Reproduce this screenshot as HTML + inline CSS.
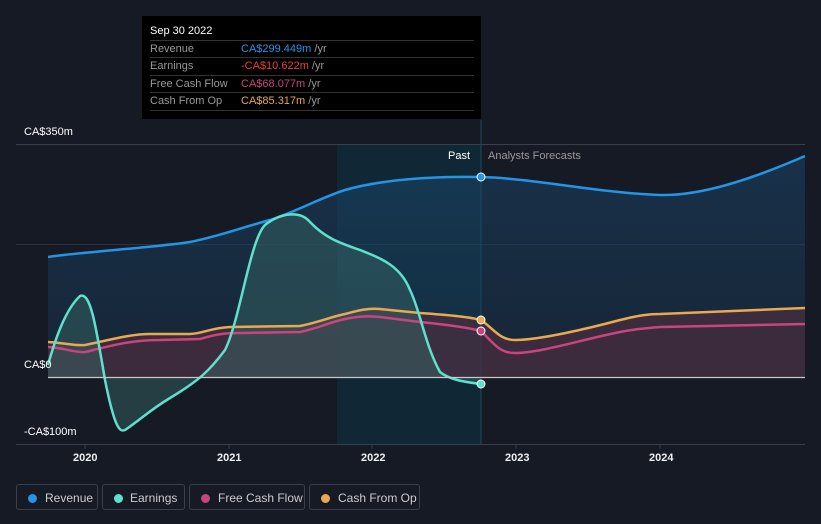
<!DOCTYPE html>
<html><head><style>
body{margin:0;width:821px;height:524px;background:#151a25;font-family:"Liberation Sans",sans-serif;overflow:hidden;position:relative}
.t{position:absolute;font-size:11px;color:#fff}
.y{font-weight:bold;color:#eee}
.tip{position:absolute;left:142px;top:16px;width:339px;height:103px;background:#000}
.tip .r{position:absolute;left:8px;width:324px;border-top:1px solid #333;font-size:11px;color:#999;height:17px;line-height:17px}
.tip .r span{position:absolute;left:91px}
.leg{position:absolute;top:484px;height:26px;border:1px solid #3a3f4a;border-radius:3px;color:#ccc;font-size:12px;line-height:26px;box-sizing:border-box}
.leg i{position:absolute;left:11px;top:9px;width:9px;height:9px;border-radius:50%}
</style></head><body>
<svg width="821" height="524" style="position:absolute;left:0;top:0">
<defs>
<linearGradient id="rg" x1="0" y1="0" x2="0" y2="1"><stop offset="0" stop-color="#1a4a70" stop-opacity=".7"/><stop offset="1" stop-color="#1a3550" stop-opacity=".6"/></linearGradient>
</defs>
<rect x="337" y="145" width="144" height="299" fill="#0f2a38" opacity=".9"/>
<line x1="16" y1="144.5" x2="805" y2="144.5" stroke="#3a3f4a"/>
<line x1="16" y1="244.5" x2="805" y2="244.5" stroke="#2c313c"/>
<line x1="16" y1="444.5" x2="805" y2="444.5" stroke="#3a3f4a"/>
<g stroke="#3a3f4a"><line x1="85" y1="444" x2="85" y2="449"/><line x1="229" y1="444" x2="229" y2="449"/><line x1="372" y1="444" x2="372" y2="449"/><line x1="516" y1="444" x2="516" y2="449"/><line x1="660" y1="444" x2="660" y2="449"/></g>
<line x1="481" y1="120" x2="481" y2="444" stroke="#1d4a60"/>
<path d="M48,257 C80,252 150,248 190,242 C220,236 240,228 270,220 C300,210 320,198 345,190 C380,180 430,176 481,177 C530,178 600,193 660,195 C700,196 750,180 805,156 L805,377 L48,377Z" fill="url(#rg)" opacity=".7"/>
<path d="M48,342 C65,343 75,346 85,345 C110,340 130,334 150,334 L190,334 C205,333 210,328 230,327 L300,326 C320,322 330,317 345,314 C360,310 368,308 380,309 L420,313 C450,315 470,317 481,320 C495,330 500,340 515,340 C540,340 590,328 620,320 C640,315 650,314 660,314 L805,308 L805,377 L48,377Z" fill="#5a3040" opacity=".55"/>
<path d="M48,365 C55,340 65,310 80,296 C90,292 95,320 105,380 C115,430 120,432 125,430 C140,420 150,410 170,398 C200,380 210,370 225,350 C240,320 250,240 265,225 C280,213 300,210 310,222 C325,238 340,243 360,250 C380,258 400,265 410,290 C420,310 425,345 440,372 C450,380 465,382 481,384 L481,377 L48,377Z" fill="#3a6a68" opacity=".45"/>
<path d="M48,257 C80,252 150,248 190,242 C220,236 240,228 270,220 C300,210 320,198 345,190 C380,180 430,176 481,177 C530,178 600,193 660,195 C700,196 750,180 805,156" fill="none" stroke="#2394e6" stroke-width="2.5"/>
<path d="M48,342 C65,343 75,346 85,345 C110,340 130,334 150,334 L190,334 C205,333 210,328 230,327 L300,326 C320,322 330,317 345,314 C360,310 368,308 380,309 L420,313 C450,315 470,317 481,320 C495,330 500,340 515,340 C540,340 590,328 620,320 C640,315 650,314 660,314 L805,308" fill="none" stroke="#e8a950" stroke-width="2.5"/>
<path d="M48,347 C65,348 75,353 85,352 C110,346 130,340 160,340 L200,339 C220,333 230,333 240,333 L300,332 C320,328 330,322 345,319 C360,316 368,316 380,317 L420,322 C450,325 470,328 481,331 C495,345 500,353 515,353 C540,353 580,340 620,332 C640,328 650,328 660,327 L805,324" fill="none" stroke="#c8457e" stroke-width="2.5"/>
<path d="M48,365 C55,340 65,310 80,296 C90,292 95,320 105,380 C115,430 120,432 125,430 C140,420 150,410 170,398 C200,380 210,370 225,350 C240,320 250,240 265,225 C280,213 300,210 310,222 C325,238 340,243 360,250 C380,258 400,265 410,290 C420,310 425,345 440,372 C450,380 465,382 481,384" fill="none" stroke="#5ee0cc" stroke-width="2.5"/>
<line x1="48" y1="377.5" x2="805" y2="377.5" stroke="#c8c8c8" stroke-width="1.3"/>
<g stroke="#fff" stroke-width="1"><circle cx="481" cy="177" r="4" fill="#2394e6"/><circle cx="481" cy="320" r="4" fill="#e8a950"/><circle cx="481" cy="331" r="4" fill="#c8457e"/><circle cx="481" cy="384" r="4" fill="#5ee0cc"/></g>
</svg>
<div class="t" style="left:24px;top:126px">CA$350m</div>
<div class="t" style="left:24px;top:359px">CA$0</div>
<div class="t" style="left:24px;top:426px">-CA$100m</div>
<div class="t" style="left:448px;top:150px">Past</div>
<div class="t" style="left:488px;top:150px;color:#999">Analysts Forecasts</div>
<div class="t y" style="left:73px;top:452px">2020</div>
<div class="t y" style="left:217px;top:452px">2021</div>
<div class="t y" style="left:361px;top:452px">2022</div>
<div class="t y" style="left:505px;top:452px">2023</div>
<div class="t y" style="left:649px;top:452px">2024</div>
<div class="tip">
<div style="position:absolute;left:8px;top:9px;color:#fff;font-size:11px">Sep 30 2022</div>
<div class="r" style="top:24px">Revenue<span><b style="font-weight:normal;color:#2394e6">CA$299.449m</b> /yr</span></div>
<div class="r" style="top:41px">Earnings<span><b style="font-weight:normal;color:#ee3b3b">-CA$10.622m</b> /yr</span></div>
<div class="r" style="top:59px">Free Cash Flow<span><b style="font-weight:normal;color:#c8457e">CA$68.077m</b> /yr</span></div>
<div class="r" style="top:76px;border-bottom:1px solid #333">Cash From Op<span><b style="font-weight:normal;color:#e8a950">CA$85.317m</b> /yr</span></div>
</div>
<div class="leg" style="left:16px;width:82px"><i style="background:#2394e6"></i><span style="position:absolute;left:28px">Revenue</span></div>
<div class="leg" style="left:102px;width:83px"><i style="background:#5ee0cc"></i><span style="position:absolute;left:27px">Earnings</span></div>
<div class="leg" style="left:189px;width:116px"><i style="background:#c8457e"></i><span style="position:absolute;left:28px">Free Cash Flow</span></div>
<div class="leg" style="left:309px;width:111px"><i style="background:#e8a950"></i><span style="position:absolute;left:28px">Cash From Op</span></div>
</body></html>
